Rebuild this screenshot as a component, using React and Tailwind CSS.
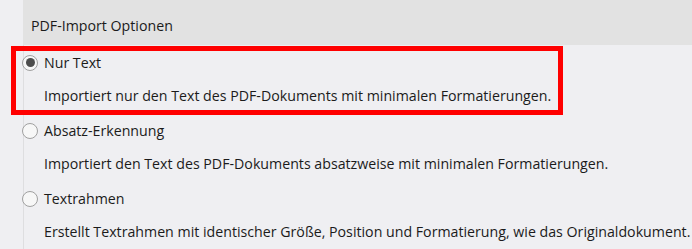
const options = [
  {
    label: "Nur Text",
    desc: "Importiert nur den Text des PDF-Dokuments mit minimalen Formatierungen.",
    checked: true,
  },
  {
    label: "Absatz-Erkennung",
    desc: "Importiert den Text des PDF-Dokuments absatzweise mit minimalen Formatierungen.",
  },
  {
    label: "Textrahmen",
    desc: "Erstellt Textrahmen mit identischer Größe, Position und Formatierung, wie das Originaldokument.",
  },
];

function Radio({ checked }) {
  return (
    <span className="relative z-10 -ml-[2px] mr-[6px] flex h-[16px] w-[16px] shrink-0 items-center justify-center rounded-full border border-[#a0a0a0] bg-[#f7f7f7]">
      {checked && <span className="h-[9px] w-[9px] rounded-full bg-[#4d4d4d]" />}
    </span>
  );
}

export default function App() {
  return (
    <div
      className="relative flex h-[249px] w-[692px] overflow-hidden bg-[#efeff2] text-[14.2px] text-[#1b1b1b]"
      style={{ fontFamily: '"Open Sans", "Noto Sans", sans-serif' }}
    >
      <div className="w-[23px] shrink-0" />
      <div className="flex flex-1 flex-col">
        <div className="flex h-[47px] items-center bg-[#e2e2e2] pl-[8px] pt-[6px]">
          PDF-Import Optionen
        </div>
        <div className="flex flex-1 flex-col border-l border-[#dedee0]">
          {options.map((o) => (
            <div key={o.label} className="flex flex-col">
              <div className="flex h-[34px] items-center pt-[1px]">
                <Radio checked={o.checked} />
                <span>{o.label}</span>
              </div>
              <div className="flex h-[34px] items-center whitespace-nowrap pl-[20px]">
                {o.desc}
              </div>
            </div>
          ))}
        </div>
      </div>
      <div className="pointer-events-none absolute left-[11px] top-[46px] h-[69px] w-[552px] border-[5px] border-[#ff0000]" />
    </div>
  );
}
